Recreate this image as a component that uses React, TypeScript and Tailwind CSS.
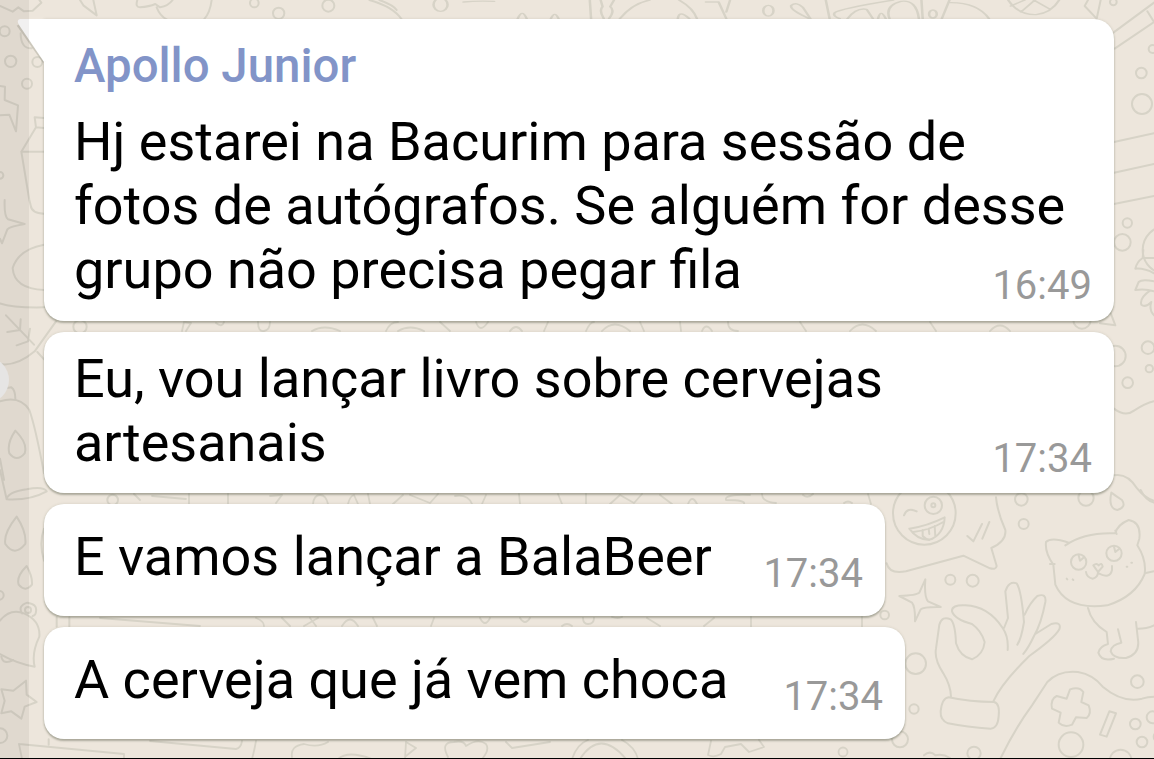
import clsx from "clsx";

type Message = {
  author?: string;
  lines: string[];
  time: string;
  box: string;
};

const messages: Message[] = [
  {
    author: "Apollo Junior",
    lines: [
      "Hj estarei na Bacurim para sessão de",
      "fotos de autógrafos. Se alguém for desse",
      "grupo não precisa pegar fila",
    ],
    time: "16:49",
    box: "w-[1070px] h-[302px] pt-[19px] pb-[11px] rounded-tl-none",
  },
  {
    lines: ["Eu, vou lançar livro sobre cervejas", "artesanais"],
    time: "17:34",
    box: "w-[1070px] h-[161px] pt-[15px] pb-2.5",
  },
  {
    lines: ["E vamos lançar a BalaBeer"],
    time: "17:34",
    box: "w-[841px] h-[112px] pt-[21px] pb-[18px]",
  },
  {
    lines: ["A cerveja que já vem choca"],
    time: "17:34",
    box: "w-[861px] h-[112px] pt-[21px] pb-[18px]",
  },
];

function Wallpaper() {
  return (
    <svg
      className="absolute inset-0"
      width="1154"
      height="759"
      viewBox="0 0 1154 759"
      fill="none"
      stroke="#d7d3c7"
      strokeWidth="6"
      strokeLinecap="round"
      strokeLinejoin="round"
    >
      {/* top left */}
      <g transform="scale(.33333)">
        <path d="M0 18L38 35L55 22L72 34L98 32L124 8L118 0M240 0L250 16L290 46L280 0M412 0Q405 22 420 22Q448 20 466 12L480 22Q505 18 518 0M470 22Q480 48 500 58M635 0Q630 40 612 58M1108 0Q1180 20 1205 58M1138 0Q1180 15 1190 30" />
        <circle cx="763" cy="9" r="13" />
        <circle cx="836" cy="40" r="17" />
        <circle cx="985" cy="17" r="18" />
        <circle cx="14" cy="94" r="15" />
        <circle cx="32" cy="184" r="17" />
        <circle cx="81" cy="251" r="15" />
        <circle cx="112" cy="186" r="15" />
        <circle cx="0" cy="526" r="10" />
        <path d="M62 100Q62 146 95 145M0 258L15 260L14 300L54 316L48 394L28 344L0 346M132 354L104 352L108 382L64 455L132 455M64 455L88 600L92 616Q95 640 132 641M108 382L132 384" />
      </g>
      {/* top strip */}
      <g transform="translate(100 0) scale(.63776 .33333)" strokeWidth="4">
        <path d="M570 6Q590 2 618 4M768 0L770 56M785 0L788 20Q782 32 790 56M806 0L800 20Q808 32 798 56M815 56Q835 10 862 0M908 0Q930 24 936 56M950 6L970 6L982 56M988 0L982 36M1112 56Q1080 28 1084 16Q1092 4 1102 22L1114 56M1138 0L1144 56M1244 0Q1160 26 1152 38Q1148 48 1160 56M1172 56Q1186 22 1202 28L1212 56M1238 56Q1230 16 1256 4Q1280 -2 1284 56M1288 0L1290 56M1320 56L1332 0M1334 8Q1376 8 1394 56M1424 0Q1440 46 1468 44Q1492 38 1504 0M1428 18L1450 0M1444 36L1466 0M1464 0L1490 28" />
        <ellipse cx="534" cy="14" rx="11" ry="20" />
        <ellipse cx="1048" cy="32" rx="8" ry="16" />
        <ellipse cx="1306" cy="42" rx="6" ry="12" />
        <path d="M655 56Q662 24 669 56M707 56Q713 30 719 56M906 56Q908 28 924 56M1220 56Q1224 24 1232 56" />
      </g>
      {/* right of the long bubbles */}
      <g transform="translate(1050 0) scale(.33333)">
        <path d="M114 0L104 18L140 56L152 0M190 98L312 8M194 146L312 66M292 34L312 66M192 426L312 400M192 518L312 492M192 612L312 588" />
        <circle cx="190" cy="6" r="10" />
        <circle cx="308" cy="147" r="12" />
        <circle cx="274" cy="219" r="16" />
        <circle cx="276" cy="312" r="30" />
        <circle cx="232" cy="669" r="14" />
        <circle cx="217" cy="727" r="25" />
        <circle cx="350" cy="750" r="72" />
        <g transform="translate(0 750)">
          <path d="M280 0L278 24L312 24M278 24Q260 36 256 56Q284 54 312 70M312 94Q276 86 266 96L256 120Q288 116 312 124M300 122Q268 144 274 164Q286 174 304 156Q296 180 312 196M192 476Q226 502 252 482Q286 460 312 454M150 220L196 226L180 184M192 676Q232 668 262 716Q290 752 330 756M184 728Q174 776 202 780Q230 772 216 750Q200 740 184 728Z" />
          <circle cx="96" cy="210" r="26" />
          <circle cx="196" cy="318" r="31" />
          <circle cx="294" cy="293" r="19" />
          <circle cx="298" cy="356" r="11" />
          <circle cx="233" cy="398" r="16" />
        </g>
      </g>
      {/* smiley, cat, hand and gamepad */}
      <g transform="translate(880 490) scale(.33333)">
        <circle cx="133" cy="70" r="94" />
        <circle cx="160" cy="46" r="26" />
        <circle cx="160" cy="46" r="6" />
        <path d="M72 76Q82 50 110 64M88 116Q142 108 194 82Q192 134 148 150Q112 150 88 116ZM100 126Q150 120 190 96M128 120L128 138Q146 158 166 140L164 108M146 116L148 132M262 138L280 154L306 102M328 96L307 146" />
        <path d="M348 22Q352 66 376 120Q380 154 334 174L350 228Q348 240 330 235L250 197L78 244Q28 254 20 220" />
        <circle cx="424" cy="28" r="19" />
        <circle cx="431" cy="102" r="15" />
        <circle cx="618" cy="24" r="23" />
        <circle cx="211" cy="269" r="15" />
        <circle cx="278" cy="272" r="18" />
        <circle cx="14" cy="375" r="13" />
        <circle cx="107" cy="521" r="31" />
        <circle cx="102" cy="657" r="14" />
        <circle cx="60" cy="748" r="24" />
        <circle cx="282" cy="790" r="20" />
        <path d="M136 268Q132 320 144 334L182 351Q130 350 122 358L105 394Q106 350 96 338L58 318Q110 316 118 308ZM132 796Q150 780 166 796Q188 790 210 804" />
        <path d="M213 620Q212 586 190 550Q162 508 168 476L178 404Q186 376 212 388Q226 402 228 460Q240 500 276 508Q310 494 314 456Q304 422 276 402Q224 388 216 364Q214 344 256 346Q324 348 368 414Q386 440 383 480M372 414L384 384L376 304Q386 272 410 280Q424 300 432 396Q424 446 412 464M434 374Q450 338 472 318Q500 308 496 336Q484 400 462 438Q446 472 430 492M466 432L514 402Q546 394 538 418Q524 444 448 498Q366 578 340 634" />
        <path d="M206 622Q270 636 342 636Q360 640 356 678Q354 714 332 716Q260 712 204 700Q180 690 182 664Q186 624 206 622Z" />
        <path d="M556 166Q614 126 706 130Q712 104 746 90Q784 96 778 146L772 166Q800 210 794 252Q766 320 682 346Q560 362 526 284L520 224Q494 188 498 156Q514 140 566 158M706 122L710 132M510 222L524 222M794 250L822 244M624 354Q634 398 680 426L684 462Q660 468 655 488Q664 516 702 506M714 418L724 458Q694 464 692 484Q700 506 738 504Q780 492 774 450L768 396M774 416Q800 416 822 406" />
        <circle cx="596" cy="216" r="23" />
        <circle cx="702" cy="190" r="23" />
        <path d="M596 196L600 212L612 202M702 170L706 186L718 176M640 226Q650 218 656 226Q666 216 668 230L654 246ZM654 246Q654 262 638 266Q620 262 618 246M656 250Q690 268 696 240L696 228M560 266L562 268M578 268L580 270M740 230L742 230M754 218L756 218" />
        <path d="M782 0Q796 30 822 38" />
        <path d="M362 804Q406 714 456 646L502 576Q536 540 594 546Q640 554 668 590Q728 640 786 626Q804 620 822 620" />
        <path d="M570 598Q598 588 610 606L604 636L626 646Q636 670 620 684L588 682L576 704Q552 714 536 698L542 668L516 656Q510 628 530 618L560 626ZM688 664L708 670L680 740L660 734Z" />
        <circle cx="573" cy="764" r="37" />
        <circle cx="772" cy="575" r="19" />
        <circle cx="766" cy="702" r="16" />
        <circle cx="786" cy="756" r="16" />
        <circle cx="818" cy="682" r="18" />
        <circle cx="722" cy="812" r="33" />
        <circle cx="836" cy="740" r="15" />
      </g>
      {/* left edge */}
      <g transform="translate(0 180) scale(.33333)">
        <path d="M14 60Q12 108 24 118L74 132Q28 140 22 148L6 190L0 176M132 194Q56 208 38 264Q42 326 132 330M0 370Q40 384 132 382M18 406L102 494M62 418L60 450L22 456M90 446L84 484L50 496M0 552Q50 560 104 514L168 424M112 516L132 538M0 628L34 622Q46 630 46 656M0 664Q60 646 88 690Q106 740 132 880M0 836L12 900M46 752Q20 790 28 820Q50 848 74 820Q84 790 46 752Z" />
        <circle cx="240" cy="440" r="20" />
      </g>
      <g transform="translate(0 470) scale(.33333)">
        <path d="M0 0L20 88Q90 92 140 64Q130 48 80 58Q24 66 20 88M50 140Q10 190 16 222Q44 262 76 222Q80 186 50 140ZM80 288Q48 320 56 344Q76 368 96 344Q98 320 80 288ZM0 452Q30 414 72 430Q122 452 118 500Q94 550 104 590Q50 580 0 552M4 560Q10 586 40 570M66 430Q52 408 82 398Q112 402 108 424Q108 436 98 438M170 442L170 470M208 442L208 470" />
        <path d="M78 632L80 674L110 696L74 710L64 746L34 724L4 730L14 692L4 658L40 662ZM146 808L146 824M132 176Q116 220 132 272" />
        <circle cx="84" cy="420" r="9" />
        <circle cx="-2" cy="376" r="13" />
        <circle cx="0" cy="797" r="22" />
        <circle cx="338" cy="90" r="16" />
      </g>
      {/* gaps between the bubbles */}
      <g strokeWidth="1.8">
        <path d="M182 331L184 322L191 323L186 331M216 323Q222 328 224 322M258 322Q258 332 264 331Q270 330 270 322M312 331Q324 324 340 331M386 331Q390 322 398 322M398 331Q410 324 424 331M440 322L450 331M476 322Q480 334 488 322M510 331Q516 323 522 331M544 331L548 322M586 331Q590 322 594 322M602 331Q614 318 630 331M640 322L644 331M680 322L681 331M702 331Q706 322 712 331M728 322Q728 331 738 331M800 322L806 331M850 331Q862 318 876 331M930 322L936 331M990 331Q1000 320 1010 331" />
        <path d="M134 494L140 500M152 496L186 499M189 494V504M228 494V504M270 496L282 495L276 503M313 504Q314 495 320 495Q326 495 328 504M348 504Q350 496 354 495L358 504M368 494L370 504M393 504L403 495M410 495L430 503L438 494M455 496Q468 494 472 504M482 504L486 495M519 494L520 504M558 494L562 504M586 494V504M610 504L620 495L634 503L642 494M660 495L672 504M688 504Q692 494 697 504M750 495Q724 494 726 500Q746 500 744 504M762 494Q762 502 776 503M803 495Q808 499 813 494M844 503Q848 500 852 503M868 494L871 504" />
        <path d="M100 618L200 626M256 618Q264 621 264 626M282 618L290 626M304 626L318 618M310 618L316 626M342 626Q350 613 358 626M373 618L377 626M434 618L431 626M480 618Q485 628 490 618M520 618Q525 626 530 618M562 626Q567 622 572 626M583 618Q583 624 588 624Q594 624 594 618M612 617Q618 619 622 617M647 618L660 626M704 626L714 618M751 617V627M862 617V627" />
        <path d="M19 744L124 754V759M19 744L22 759M150 741L236 749Q241 748 242 741M256 741Q254 752 252 759M292 757Q290 746 304 744Q318 748 328 742M338 759Q348 750 372 759M406 742L405 759M406 742L416 748L406 756M448 757Q440 742 454 742Q464 740 466 746Q478 738 486 744Q490 750 482 759M506 742L512 748L550 742M572 759Q577 744 588 740M580 759Q600 728 626 759M622 740Q635 747 638 759M711 741L708 755Q714 758 721 754L725 747L741 744L749 752L764 747L759 740" />
        <circle cx="843" cy="752" r="4.5" />
      </g>
    </svg>
  );
}

function Bubble({ message }: { message: Message }) {
  return (
    <div
      className={clsx(
        "relative flex items-end justify-between rounded-[20px] bg-white pr-[22px] pl-[30px] shadow-[0_2px_2px_rgba(80,85,65,0.38),0_0_3px_rgba(80,85,65,0.16)]",
        message.box,
      )}
    >
      {message.author && (
        <svg
          className="absolute top-0 right-full -mr-px overflow-visible"
          width="28"
          height="46"
          viewBox="0 0 28 46"
        >
          <path
            d="M1 6L27 43"
            stroke="#8f9080"
            strokeOpacity=".35"
            strokeWidth="3"
            fill="none"
          />
          <path d="M28 0H3Q-1 1 2 6L27 43H28Z" fill="#fff" />
        </svg>
      )}
      <div className="flex flex-col gap-4 self-start whitespace-nowrap">
        {message.author && (
          <h2 className="text-[47.4px] leading-[56px] font-medium text-[#8294c8]">
            {message.author}
          </h2>
        )}
        <p className="flex flex-col text-[54px] leading-[64px] text-black">
          {message.lines.map((line) => (
            <span key={line}>{line}</span>
          ))}
        </p>
      </div>
      <time className="-ml-24 text-[40px] leading-[48px] text-[#999]">{message.time}</time>
    </div>
  );
}

function App() {
  return (
    <main className="relative h-[759px] w-[1154px] overflow-hidden bg-[#ede6dc] font-['Roboto',sans-serif]">
      <Wallpaper />
      <div className="relative flex flex-col items-start gap-[11px] pt-[19px] pl-11">
        {messages.map((message) => (
          <Bubble key={message.lines[0]} message={message} />
        ))}
      </div>
      {/* side shade with the round handle */}
      <div className="absolute inset-y-0 left-0 flex w-[29px] items-center bg-[#50463c]/8">
        <div className="-ml-[37px] size-[46px] shrink-0 rounded-full bg-[#e6e5e4]" />
      </div>
      <div className="absolute inset-x-0 bottom-0 h-px bg-black" />
    </main>
  );
}

export default App;
